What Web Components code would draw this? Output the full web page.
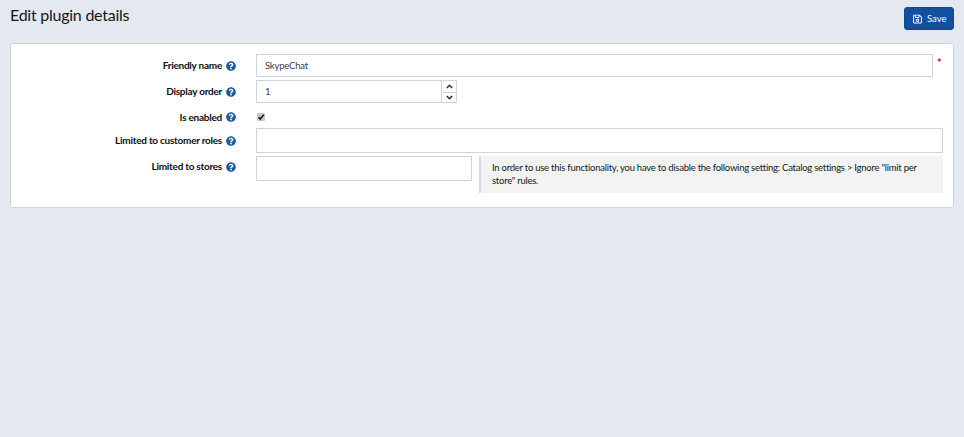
<!DOCTYPE html>
<html>
<head>
<meta charset="utf-8">
<title>Edit plugin details</title>
<style>
  html, body { margin: 0; height: 100%; }
  body {
    background: #e4e8f0;
    font-family: Lato, "Noto Sans", sans-serif;
    font-size: 12px;
    color: #212529;
  }
</style>
</head>
<body>
<plugin-page>
  <page-header title="Edit plugin details"></page-header>
  <form-card>
    <form-row label="Friendly name" top="10" row-height="23">
      <text-box value="SkypeChat" width="677" height="23"></text-box>
      <span class="req" style="color:#f00;margin:2px 0 0 4px;font-size:11px;line-height:14px;align-self:flex-start;font-weight:700">*</span>
    </form-row>
    <form-row label="Display order" top="3" row-height="23">
      <number-box value="1"></number-box>
    </form-row>
    <form-row label="Is enabled" top="10" row-height="8">
      <check-box></check-box>
    </form-row>
    <form-row label="Limited to customer roles" top="7" row-height="25">
      <text-box width="687" height="25"></text-box>
    </form-row>
    <form-row label="Limited to stores" top="3" row-height="37" label-top="3">
      <text-box width="216" height="25" style="align-self:flex-start"></text-box>
      <note-box>In order to use this functionality, you have to disable the following setting: Catalog settings &gt; Ignore "limit per store" rules.</note-box>
    </form-row>
  </form-card>
</plugin-page>

<script>
const helpIcon = `<svg width="10" height="10" viewBox="0 0 512 512" aria-hidden="true"><path fill="#1f5a9e" d="M504 256c0 137-111 248-248 248S8 393 8 256 119 8 256 8s248 111 248 248zM262.700 90c-54.500 0-89.300 23-116.500 63.800-3.500 5.300-2.400 12.400 2.700 16.300l34.700 26.300c5.200 3.900 12.600 3 16.700-2.100 17.900-22.700 30.100-35.800 57.300-35.800 20.400 0 45.700 13.100 45.700 32.900 0 15-12.400 22.700-32.500 34-23.500 13.200-54.600 29.600-54.600 70.700V300c0 6.600 5.400 12 12 12h56c6.600 0 12-5.400 12-12v-1.300c0-28.500 83.200-29.700 83.200-106.700 0-58-60.200-102-116.500-102zM256 338c-25.400 0-46 20.600-46 46s20.600 46 46 46 46-20.600 46-46-20.600-46-46-46z"/></svg>`;

class PluginPage extends HTMLElement {
  constructor() {
    super();
    this.attachShadow({ mode: 'open' });
    this.shadowRoot.innerHTML = `
      <style>
        :host { display: block; padding: 7px 10px 0; }
      </style>
      <slot></slot>
    `;
  }
}

class PageHeader extends HTMLElement {
  constructor() {
    super();
    this.attachShadow({ mode: 'open' });
    this.shadowRoot.innerHTML = `
      <style>
        :host {
          display: flex;
          justify-content: space-between;
          align-items: flex-start;
          height: 36px;
        }
        h1 {
          margin: -2px 0 0;
          font: 400 16px/20px Lato, "Noto Sans", sans-serif;
          letter-spacing: -0.25px;
          color: #14171a;
        }
        button {
          display: flex;
          align-items: center;
          gap: 5px;
          box-sizing: border-box;
          width: 50px;
          height: 23px;
          padding: 0 0 0 8px;
          border: 1px solid #0d4a94;
          border-radius: 3px;
          background: #12509e;
          color: #fff;
          font: 400 9.500px Lato, "Noto Sans", sans-serif;
        }
      </style>
      <h1></h1>
      <button type="button">
        <svg width="9" height="10" viewBox="0 0 448 512"><path fill="#fff" d="M433.900 129.900l-83.900-83.900A48 48 0 0 0 316.100 32H48C21.500 32 0 53.500 0 80v352c0 26.500 21.500 48 48 48h352c26.500 0 48-21.500 48-48V163.900a48 48 0 0 0-14.100-34zM272 80v80H144V80h128zm122 352H54a6 6 0 0 1-6-6V86a6 6 0 0 1 6-6h42v104c0 13.300 10.700 24 24 24h176c13.300 0 24-10.700 24-24V83.900l78.200 78.200a6 6 0 0 1 1.800 4.200V426a6 6 0 0 1-6 6zM224 232c-48.500 0-88 39.500-88 88s39.500 88 88 88 88-39.500 88-88-39.500-88-88-88zm0 128c-22.100 0-40-17.900-40-40s17.900-40 40-40 40 17.900 40 40-17.900 40-40 40z"/></svg>
        <span>Save</span>
      </button>
    `;
    this.shadowRoot.querySelector('h1').textContent = this.getAttribute('title');
  }
}

class FormCard extends HTMLElement {
  constructor() {
    super();
    this.attachShadow({ mode: 'open' });
    this.shadowRoot.innerHTML = `
      <style>
        :host {
          display: block;
          box-sizing: border-box;
          width: 944px;
          height: 165px;
          background: #fff;
          border: 1px solid #ced3de;
          border-radius: 3px;
        }
      </style>
      <slot></slot>
    `;
  }
}

class FormRow extends HTMLElement {
  constructor() {
    super();
    this.attachShadow({ mode: 'open' });
    const label = this.getAttribute('label');
    const top = this.getAttribute('top') || 0;
    const h = this.getAttribute('row-height');
    const labelTop = this.getAttribute('label-top');
    this.shadowRoot.innerHTML = `
      <style>
        :host {
          display: flex;
          margin-top: ${top}px;
          height: ${h}px;
        }
        .label {
          flex: none;
          box-sizing: border-box;
          width: 245px;
          padding-right: 20px;
          display: flex;
          justify-content: flex-end;
          align-items: ${labelTop ? 'flex-start' : 'center'};
          gap: 4px;
          font: 700 10px/16px Lato, "Noto Sans", sans-serif;
          letter-spacing: -0.25px;
          color: #0d0f12;
          ${labelTop ? `padding-top: ${labelTop}px;` : ''}
        }
        .label svg { flex: none; }
        .label span { margin-top: -1px; }
        ${labelTop ? `.label svg { margin-top: 3px; }` : ''}
        .field { flex: 1; display: flex; align-items: center; min-width: 0; }
      </style>
      <div class="label"><span>${label}</span>${helpIcon}</div>
      <div class="field"><slot></slot></div>
    `;
  }
}

class TextBox extends HTMLElement {
  constructor() {
    super();
    this.attachShadow({ mode: 'open' });
    const w = this.getAttribute('width');
    const h = this.getAttribute('height');
    this.shadowRoot.innerHTML = `
      <style>
        :host {
          display: flex;
          align-items: center;
          flex: none;
          box-sizing: border-box;
          width: ${w}px;
          height: ${h}px;
          padding-left: 8px;
          border: 1px solid #ced3de;
          background: #fff;
          font: 400 9.500px Lato, "Noto Sans", sans-serif;
          letter-spacing: -0.2px;
          color: #3c4248;
        }
      </style>
      <span></span>
    `;
    this.shadowRoot.querySelector('span').textContent = this.getAttribute('value') || '';
  }
}

class NumberBox extends HTMLElement {
  constructor() {
    super();
    this.attachShadow({ mode: 'open' });
    this.shadowRoot.innerHTML = `
      <style>
        :host {
          display: flex;
          flex: none;
          box-sizing: border-box;
          width: 201px;
          height: 23px;
          border: 1px solid #ced3de;
          background: #fff;
          font: 400 9.500px Lato, "Noto Sans", sans-serif;
          color: #3c4248;
        }
        .val { flex: 1; display: flex; align-items: center; padding-left: 8px; }
        .spin {
          width: 14px;
          display: grid;
          grid-template-rows: 1fr 1fr;
          border-left: 1px solid #ced3de;
        }
        .spin div { display: flex; align-items: center; justify-content: center; }
        .spin div + div { border-top: 1px solid #ced3de; }
      </style>
      <div class="val"></div>
      <div class="spin">
        <div><svg width="7" height="5" viewBox="0 0 7 5"><path d="M.8 4 3.500 1.300 6.200 4" fill="none" stroke="#1d3557" stroke-width="1.500"/></svg></div>
        <div><svg width="7" height="5" viewBox="0 0 7 5"><path d="M.8 1 3.500 3.700 6.200 1" fill="none" stroke="#1d2a3a" stroke-width="1.500"/></svg></div>
      </div>
    `;
    this.shadowRoot.querySelector('.val').textContent = this.getAttribute('value');
  }
}

class CheckBox extends HTMLElement {
  constructor() {
    super();
    this.attachShadow({ mode: 'open' });
    this.shadowRoot.innerHTML = `
      <style>
        :host {
          display: flex;
          align-items: center;
          justify-content: center;
          flex: none;
          box-sizing: border-box;
          width: 8px;
          height: 8px;
          border-radius: 1px;
          background: #c9c9c9;
          margin-left: 1px;
        }
      </style>
      <svg width="8" height="8" viewBox="0 0 8 8"><path d="M1.500 4.200 3.200 6 6.700 1.800" fill="none" stroke="#111" stroke-width="1.500"/></svg>
    `;
  }
}

class NoteBox extends HTMLElement {
  constructor() {
    super();
    this.attachShadow({ mode: 'open' });
    this.shadowRoot.innerHTML = `
      <style>
        :host {
          display: block;
          box-sizing: border-box;
          flex: none;
          width: 464px;
          height: 37px;
          margin-left: 7px;
          padding: 5px 10px 0 11px;
          background: #f3f3f4;
          border-left: 2px solid #d9dbe0;
          font: 400 9.500px/13px Lato, "Noto Sans", sans-serif;
          letter-spacing: -0.25px;
          color: #14171a;
        }
      </style>
      <slot></slot>
    `;
  }
}

customElements.define('plugin-page', PluginPage);
customElements.define('page-header', PageHeader);
customElements.define('form-card', FormCard);
customElements.define('form-row', FormRow);
customElements.define('text-box', TextBox);
customElements.define('number-box', NumberBox);
customElements.define('check-box', CheckBox);
customElements.define('note-box', NoteBox);
</script>
</body>
</html>
